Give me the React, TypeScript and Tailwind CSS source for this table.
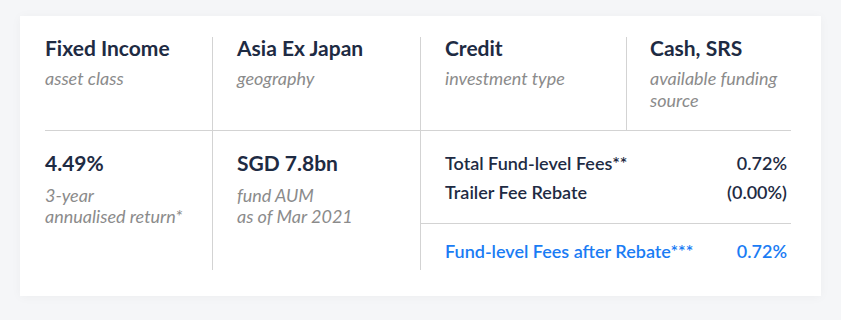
import React from "react";

const font = { fontFamily: "Lato, 'Open Sans', sans-serif" };

function Top({ title, sub, cls }: { title: string; sub: React.ReactNode; cls: string }) {
  return (
    <div className={cls}>
      <div className="text-[21px] font-bold leading-[22px] text-[#1e2b43]">{title}</div>
      <div className="mt-[8px] text-[18px] italic leading-[22px] text-[#8b8b8b]">{sub}</div>
    </div>
  );
}

function Bottom({ title, sub, cls }: { title: string; sub: React.ReactNode; cls: string }) {
  return (
    <div className={cls}>
      <div className="text-[21px] font-bold leading-[24px] text-[#1e2b43]">{title}</div>
      <div className="mt-[10px] text-[18px] italic leading-[21px] text-[#8b8b8b]">{sub}</div>
    </div>
  );
}

export default function App() {
  return (
    <div className="h-[320px] w-[841px] bg-[#f5f6f8] pt-[16px] pl-[20px]" style={font}>
      <div className="h-[280px] w-[801px] bg-white pl-[25px] pr-[30px] pt-[21px] shadow-[0_1px_10px_rgba(0,0,0,0.04)]">
        <div className="grid grid-cols-[168px_208px_206px_164px]">
          <Top cls="h-[94px] border-b border-r border-[#d3d3d3]" title="Fixed Income" sub="asset class" />
          <Top cls="h-[94px] border-b border-r border-[#d3d3d3] pl-[24px]" title="Asia Ex Japan" sub="geography" />
          <Top cls="h-[94px] border-b border-r border-[#d3d3d3] pl-[24px]" title="Credit" sub="investment type" />
          <Top
            cls="h-[94px] border-b border-[#d3d3d3] pl-[23px]"
            title="Cash, SRS"
            sub={
              <>
                available funding
                <br />
                source
              </>
            }
          />
          <Bottom
            cls="h-[139px] border-r border-[#d3d3d3] pt-[20px]"
            title="4.49%"
            sub={
              <>
                3-year
                <br />
                annualised return*
              </>
            }
          />
          <Bottom
            cls="h-[139px] border-r border-[#d3d3d3] pl-[24px] pt-[20px]"
            title="SGD 7.8bn"
            sub={
              <>
                fund AUM
                <br />
                as of Mar 2021
              </>
            }
          />
          <div className="col-span-2 pt-[18px] text-[18px] font-semibold leading-[29px]">
            <div className="border-b border-[#d3d3d3] pb-[16px] pl-[24px] pr-[4px] text-[#1e2b43]">
              <div className="flex justify-between">
                <span>Total Fund-level Fees**</span>
                <span>0.72%</span>
              </div>
              <div className="flex justify-between">
                <span>Trailer Fee Rebate</span>
                <span>(0.00%)</span>
              </div>
            </div>
            <div className="flex justify-between pl-[24px] pr-[4px] pt-[13px] text-[#1a7cf4]">
              <span>Fund-level Fees after Rebate***</span>
              <span>0.72%</span>
            </div>
          </div>
        </div>
      </div>
    </div>
  );
}
